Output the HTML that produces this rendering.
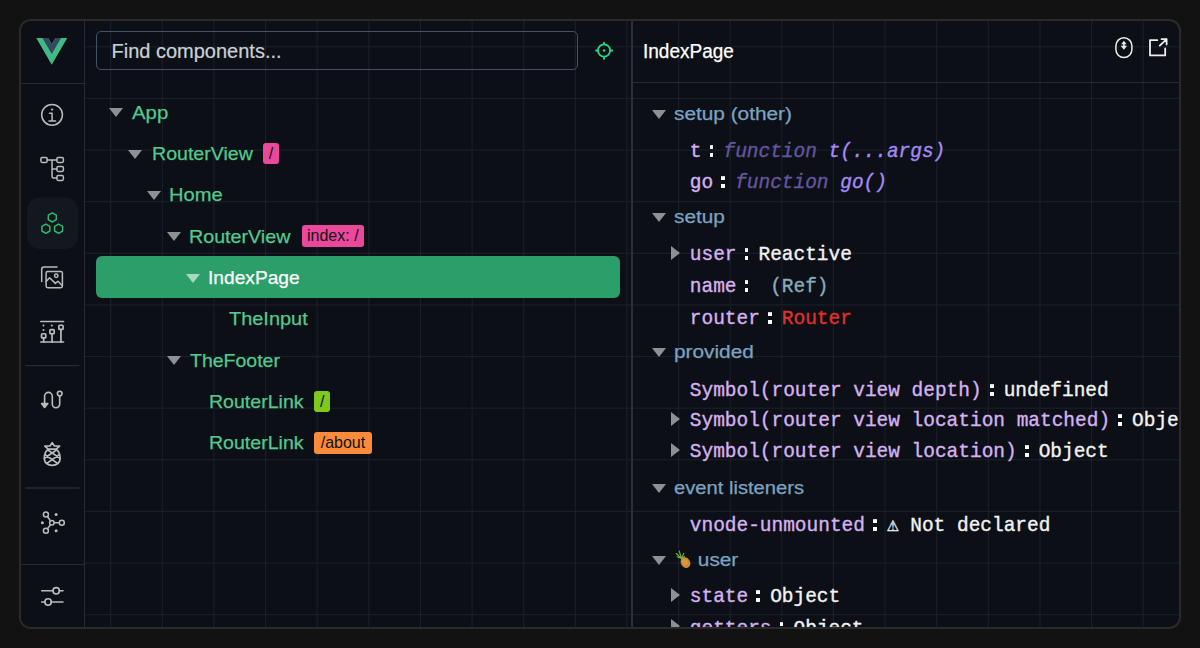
<!DOCTYPE html>
<html><head><meta charset="utf-8">
<style>
*{box-sizing:border-box;margin:0;padding:0}
html,body{width:1200px;height:648px;overflow:hidden;background:#121212;font-family:"Liberation Sans",sans-serif}
#panel{position:absolute;left:19px;top:19px;width:1162px;height:610px;border:2px solid #2a2a2a;border-radius:12px;background:#0c1016;overflow:hidden}
#clip{position:absolute;left:0;top:0;width:1200px;height:648px;clip-path:inset(21px 21px 21px 21px round 10px)}
#grid{position:absolute;left:0;top:0;width:100%;height:100%;
 background-image:linear-gradient(to right,#19202a 1px,transparent 1px),linear-gradient(to bottom,#19202a 1px,transparent 1px);
 background-size:51.63px 51.63px;background-position:37.6px 25.3px}
.abs{position:absolute;white-space:nowrap}
#side{position:absolute;left:0;top:0;width:64px;height:100%;background:#0c1016;border-right:1px solid #262b32}
.hl{position:absolute;height:1px;background:#262b32}
#split{position:absolute;left:610px;top:0;width:2px;height:100%;background:#2a3039}
.tree{font-size:19px;line-height:19px;transform-origin:0 0;-webkit-text-stroke:0.25px currentColor}
.tri{position:absolute;width:0;height:0;border-left:7.2px solid transparent;border-right:7.2px solid transparent;border-top:9.7px solid #8d9195}
.trir{position:absolute;width:0;height:0;border-top:7.2px solid transparent;border-bottom:7.2px solid transparent;border-left:9.7px solid #8d9195}
.badge{position:absolute;height:21.5px;border-radius:3px;color:#111;font-size:16px;line-height:22px;text-align:center;white-space:nowrap}
.sec{font-size:18px;line-height:18px;color:#7ca2c2;transform-origin:0 0;-webkit-text-stroke:0.25px currentColor}
.mono{font-family:"Liberation Mono",monospace;font-size:19.47px;line-height:19.3px;-webkit-text-stroke:0.35px currentColor;transform:scaleY(1.07);transform-origin:0 14.84px}
.k{color:#d5b1f2}
.c{display:inline-block;width:3.9px;height:10.9px;margin:0 10.05px 0 8.05px;background:linear-gradient(#fff 0,#fff 35%,transparent 35%,transparent 65%,#fff 65%,#fff 100%)}
.w{color:#f2f2f2}
.fn{color:#64559f;font-style:italic}
.fv{color:#a58af5;font-style:italic}
.ref{color:#8aabb8}
.red{color:#e0302a}
#search{position:absolute;left:95.7px;top:31.3px;width:482px;height:38.7px;border:1px solid #3e5469;border-radius:5px;background:transparent}
#sel{position:absolute;left:95.7px;top:256.1px;width:524px;height:41.6px;border-radius:6px;background:#2c9e69}
</style></head>
<body>
<div id="panel">
 <div id="grid"></div>
 <div id="side"></div>
 <div class="hl" style="left:0;top:62px;width:64px"></div>
 <div class="hl" style="left:0;top:543px;width:64px"></div>
 <div id="split"></div>
 <div class="hl" style="left:612px;top:61px;width:560px"></div>
</div>
<div id="clip">
<div id="search"></div>
<div class="abs" style="left:111.5px;top:40.6px;font-size:20px;line-height:20px;color:#c9d1d8;-webkit-text-stroke:0.2px #c9d1d8">Find components...</div>
<div id="sel"></div>
<div class="tri" style="left:108.6px;top:108.3px;border-top-color:#8d9195"></div>
<div class="abs tree" style="left:132.3px;top:102.8px;color:#53c98f;transform:scaleX(1.0706)">App</div>
<div class="tri" style="left:127.9px;top:149.6px;border-top-color:#8d9195"></div>
<div class="abs tree" style="left:151.5px;top:144.1px;color:#53c98f;transform:scaleX(1.0305)">RouterView</div>
<div class="badge" style="left:262.9px;top:142.8px;width:16.3px;background:#e9489b">/</div>
<div class="tri" style="left:147.3px;top:190.9px;border-top-color:#8d9195"></div>
<div class="abs tree" style="left:169.0px;top:185.4px;color:#53c98f;transform:scaleX(1.0585)">Home</div>
<div class="tri" style="left:166.7px;top:232.2px;border-top-color:#8d9195"></div>
<div class="abs tree" style="left:189.4px;top:226.7px;color:#53c98f;transform:scaleX(1.0362)">RouterView</div>
<div class="badge" style="left:301.8px;top:225.4px;width:62px;background:#e9489b">index: /</div>
<div class="tri" style="left:186.0px;top:273.5px;border-top-color:#a8d8bf"></div>
<div class="abs tree" style="left:208.1px;top:268.0px;color:#ffffff;transform:scaleX(1.0092)">IndexPage</div>
<div class="abs tree" style="left:229.0px;top:309.4px;color:#53c98f;transform:scaleX(1.0496)">TheInput</div>
<div class="tri" style="left:166.7px;top:356.2px;border-top-color:#8d9195"></div>
<div class="abs tree" style="left:190.4px;top:350.7px;color:#53c98f;transform:scaleX(1.0258)">TheFooter</div>
<div class="abs tree" style="left:208.6px;top:392.0px;color:#53c98f;transform:scaleX(1.029)">RouterLink</div>
<div class="badge" style="left:314.2px;top:390.7px;width:16.1px;background:#7ec91c">/</div>
<div class="abs tree" style="left:208.6px;top:433.3px;color:#53c98f;transform:scaleX(1.029)">RouterLink</div>
<div class="badge" style="left:314.2px;top:432.0px;width:57.5px;background:#f98b3a">/about</div>
<div class="abs" style="left:643.3px;top:41.8px;font-size:19.5px;line-height:19.5px;color:#fff;transform:scaleX(0.975);transform-origin:0 0;-webkit-text-stroke:0.25px #fff">IndexPage</div>
<div class="tri" style="left:651.6px;top:109.7px"></div><div class="abs sec" style="left:674.2px;top:104.8px;transform:scaleX(1.156)">setup (other)</div>
<div class="abs mono" style="left:689.8px;top:143.2px"><span class="k">t</span><span class="c"></span><span class="fn">function </span><span class="fv">t(...args)</span></div>
<div class="abs mono" style="left:689.8px;top:174.2px"><span class="k">go</span><span class="c"></span><span class="fn">function </span><span class="fv">go()</span></div>
<div class="tri" style="left:651.6px;top:213.0px"></div><div class="abs sec" style="left:674.2px;top:208.1px;transform:scaleX(1.156)">setup</div>
<div class="trir" style="left:670.7px;top:245.8px"></div><div class="abs mono" style="left:689.8px;top:246.1px"><span class="k">user</span><span class="c"></span><span class="w">Reactive</span></div>
<div class="abs mono" style="left:689.8px;top:277.7px"><span class="k">name</span><span class="c"></span> <span class="ref">(Ref)</span></div>
<div class="abs mono" style="left:689.8px;top:309.7px"><span class="k">router</span><span class="c"></span><span class="red">Router</span></div>
<div class="tri" style="left:651.6px;top:348.2px"></div><div class="abs sec" style="left:674.2px;top:343.3px;transform:scaleX(1.156)">provided</div>
<div class="abs mono" style="left:689.8px;top:381.9px"><span class="k">Symbol(router view depth)</span><span class="c"></span><span class="w">undefined</span></div>
<div class="trir" style="left:670.7px;top:411.7px"></div><div class="abs mono" style="left:689.8px;top:412.0px"><span class="k">Symbol(router view location matched)</span><span class="c"></span><span class="w">Object</span></div>
<div class="trir" style="left:670.7px;top:442.5px"></div><div class="abs mono" style="left:689.8px;top:442.8px"><span class="k">Symbol(router view location)</span><span class="c"></span><span class="w">Object</span></div>
<div class="tri" style="left:651.6px;top:483.7px"></div><div class="abs sec" style="left:674.2px;top:478.8px;transform:scaleX(1.12)">event listeners</div>
<div class="abs mono" style="left:689.8px;top:516.5px"><span class="k">vnode-unmounted</span><span class="c"></span><span class="w">&#9888; Not declared</span></div>
<div class="tri" style="left:651.6px;top:555.7px"></div><div class="abs sec" style="left:674.2px;top:550.8px;transform:scaleX(1.156)"><span style="display:inline-block;width:20.6px"></span>user</div>
<div class="trir" style="left:670.7px;top:587.9px"></div><div class="abs mono" style="left:689.8px;top:588.2px"><span class="k">state</span><span class="c"></span><span class="w">Object</span></div>
<div class="trir" style="left:670.7px;top:619.4px"></div><div class="abs mono" style="left:689.8px;top:619.7px"><span class="k">getters</span><span class="c"></span><span class="w">Object</span></div>
<svg id="icons" width="1200" height="648" viewBox="0 0 1200 648" style="position:absolute;left:0;top:0" fill="none" stroke-linecap="round" stroke-linejoin="round">
<!-- vue logo -->
<g transform="translate(36.25,37.9) scale(0.1184)">
<path fill="#42b883" d="M161.096.001l-30.225 52.351L100.647.001H-.005l130.877 226.688L261.749.001z"/>
<path fill="#35495e" d="M161.096.001l-30.225 52.351L100.647.001H52.346l78.526 136.01L209.398.001z"/>
</g>
<!-- info -->
<g stroke="#b9bcbf" stroke-width="1.5">
<circle cx="52.05" cy="114.8" r="10.4"/>
<path d="M49.5 113.2H52.1V121M49 121H55.5"/>
</g>
<circle cx="52.1" cy="109.6" r="1.15" fill="#b9bcbf"/>
<!-- tree -->
<g stroke="#b9bcbf" stroke-width="1.5">
<rect x="40.9" y="157.6" width="6.3" height="4.8" rx="1.3"/>
<rect x="56.9" y="157.6" width="6.5" height="4.8" rx="1.3"/>
<rect x="56.9" y="166.6" width="6.5" height="4.8" rx="1.3"/>
<rect x="56.9" y="175.6" width="6.5" height="4.8" rx="1.3"/>
<path d="M47.2 160H56.9M52.05 160V176.5Q52.05 178 53.5 178H56.9M52.05 169H56.9"/>
</g>
<!-- components active bg -->
<rect x="27" y="197.4" width="51" height="51.6" rx="13" fill="#13181f"/>
<g stroke="#2fb872" stroke-width="1.45">
<path d="M52.3 212.8L56.3 215.1V219.7L52.3 222L48.3 219.7V215.1Z"/>
<path d="M45.9 224.1L49.9 226.4V231L45.9 233.3L41.9 231V226.4Z"/>
<path d="M58.6 224.1L62.6 226.4V231L58.6 233.3L54.6 231V226.4Z"/>
</g>
<!-- image -->
<g stroke="#b9bcbf" stroke-width="1.5">
<path d="M41.7 281.6V269.2Q41.7 266.9 44 266.9H57"/>
<rect x="46.1" y="271.4" width="16.3" height="16.3" rx="1.6"/>
<path d="M46.1 281.5L49.6 277.8L55.4 283.4L58 281.2L62.4 285.7"/>
<circle cx="56.25" cy="275.8" r="1.7"/>
</g>
<!-- timeline -->
<g stroke="#b9bcbf" stroke-width="1.7">
<path d="M40.9 321.5H63.5M40.9 342H63.5"/>
<rect x="41.55" y="333.75" width="4.2" height="4.2" rx="0.8"/>
<rect x="49.95" y="329.55" width="4.2" height="4.2" rx="0.8"/>
<rect x="58.85" y="325.25" width="4.2" height="4.2" rx="0.8"/>
<path d="M43.65 338V342M52.05 333.8V342M60.95 329.5V342"/>
</g>
<g fill="#b9bcbf"><circle cx="43.5" cy="325.6" r="1"/><circle cx="43.5" cy="329.9" r="1"/><circle cx="51.8" cy="325.6" r="1"/></g>
<!-- separators -->
<path d="M26 365.6H79M26 488H79" stroke="#262b32" stroke-width="1.3"/>
<!-- route -->
<g stroke="#b9bcbf" stroke-width="1.6">
<circle cx="59.7" cy="393.6" r="2.3"/>
<path d="M59.7 395.9V404A3.7 3.7 0 0 1 52.3 404V396.2A3.85 3.85 0 0 0 44.6 396.2V407"/>
<path d="M41.6 403.6L44.6 407.4L47.8 403.6Z" fill="#b9bcbf"/>
</g>
<!-- pinia -->
<defs><clipPath id="pbody"><path d="M47.5 450C44.5 452 43.7 455.5 43.7 458.5C43.7 463 47.5 466 52.2 466C56.9 466 60.7 463 60.7 458.5C60.7 455.5 59.9 452 56.9 450Z"/></clipPath></defs>
<g stroke="#b9bcbf" stroke-width="1.7">
<path d="M52.2 442.6L54.2 445.8L59.6 446.2L56.2 449.2L48.2 449.2L44.8 446.2L50.2 445.8Z" />
<path d="M48.2 449.6C44.8 451.6 44.3 455.3 44.3 458.5C44.3 462.7 47.8 465.4 52.2 465.4C56.6 465.4 60.1 462.7 60.1 458.5C60.1 455.3 59.6 451.6 56.2 449.6"/>
<path clip-path="url(#pbody)" d="M43 446.6L61.4 459.3M61.4 446.6L43 459.3M43 453.3L61.4 466M61.4 453.3L43 466"/>
</g>
<!-- graph -->
<g stroke="#b9bcbf" stroke-width="1.5">
<circle cx="45.9" cy="514.5" r="2.5"/>
<circle cx="45.9" cy="530.7" r="2.5"/>
<circle cx="51.9" cy="522.8" r="2.3"/>
<circle cx="61.8" cy="522.8" r="2.5"/>
<path d="M47.4 516.5L50.5 520.9M47.4 528.7L50.5 524.7M54.2 522.8H59.3"/>
</g>
<g fill="#b9bcbf"><circle cx="56.1" cy="514.5" r="1.5"/><circle cx="42.4" cy="522.8" r="1.5"/><circle cx="56.1" cy="530.7" r="1.5"/></g>
<!-- sliders -->
<g stroke="#b9bcbf" stroke-width="1.6">
<path d="M41.7 590.8H52.9M59.4 590.8H63M41.7 602H44.8M51.3 602H63"/>
<circle cx="56.2" cy="590.8" r="3.2"/>
<circle cx="48.1" cy="602" r="3.2"/>
</g>
<!-- pineapple -->
<g stroke="#6cb33a" stroke-width="1.1">
<path d="M681.5 558.5L676.3 553.5M681.5 558.5L679.2 551M681.5 558.5L683.8 553.2M681.5 558.5L677 556.8M681.5 558.5L684.5 556.5"/>
</g>
<ellipse cx="685.5" cy="562.6" rx="4.6" ry="5.6" transform="rotate(-32 685.5 562.6)" fill="#cf8a35"/>
<ellipse cx="685" cy="562" rx="2.5" ry="3.2" transform="rotate(-32 685 562)" fill="#e0a04a" opacity="0.6"/>
<!-- target icon -->
<g stroke="#22d683" stroke-width="1.8">
<circle cx="604.05" cy="50.5" r="6.1"/>
<path d="M604.05 42.6V44.4M604.05 56.6V58.9M596 50.5H597.9M610.2 50.5H612.3"/>
</g>
<circle cx="604.05" cy="50.5" r="1.25" fill="#22d683"/>
<!-- mouse icon -->
<g stroke="#ededed" stroke-width="1.5">
<rect x="1115.9" y="37.8" width="16" height="19.8" rx="8"/>
</g>
<g fill="#ededed">
<path d="M1123.9 40.8L1121.2 44.3H1126.6Z"/>
<path d="M1123.9 49.8L1120.7 45.8H1127.1Z"/>
<rect x="1123.15" y="43" width="1.5" height="4"/>
</g>
<!-- external link -->
<g stroke="#ededed" stroke-width="1.8">
<path d="M1157.3 40.2H1150V55.4H1165.2V48.3M1159.8 45.6L1166.6 39.1M1161.5 39.1H1166.6V44.4"/>
</g>
</svg>
</div>
</body></html>
